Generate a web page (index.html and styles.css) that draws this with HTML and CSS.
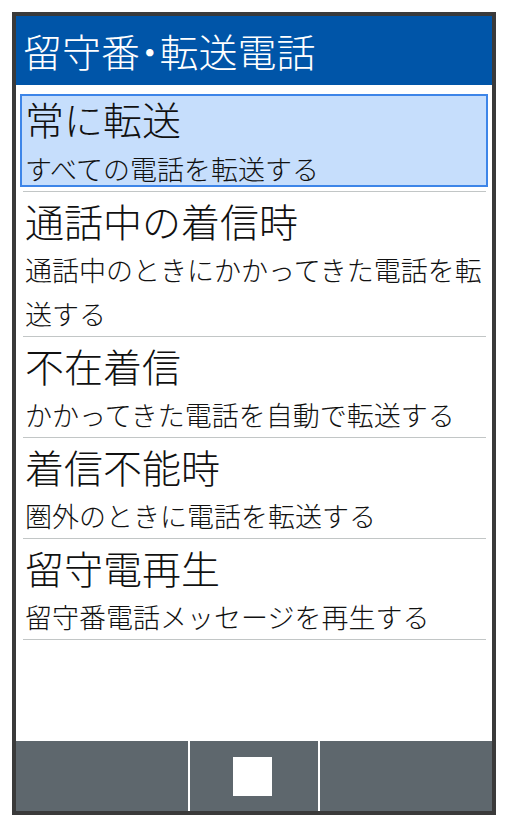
FILE: index.html
```html
<!DOCTYPE html>
<html lang="ja">
<head>
    <meta charset="UTF-8">
    <meta name="viewport" content="width=device-width, initial-scale=1.0">
    <title>留守番・転送電話</title>
    <link rel="stylesheet" href="styles.css">
</head>
<body>
    <div class="phone">
        <div class="header">留守番<span class="dot">・</span>転送電話</div>
        <div class="list">
            <div class="item first">
                <div class="selected">
                    <div class="title">常に転送</div>
                    <div class="sub">すべての電話を転送する</div>
                </div>
            </div>
            <div class="item">
                <div class="title">通話中の着信時</div>
                <div class="sub">通話中のときにかかってきた電話を転送する</div>
            </div>
            <div class="item">
                <div class="title">不在着信</div>
                <div class="sub">かかってきた電話を自動で転送する</div>
            </div>
            <div class="item">
                <div class="title">着信不能時</div>
                <div class="sub">圏外のときに電話を転送する</div>
            </div>
            <div class="item">
                <div class="title">留守電再生</div>
                <div class="sub">留守番電話メッセージを再生する</div>
            </div>
        </div>
        <div class="softkeys">
            <div class="key"></div>
            <div class="key center"><span class="square"></span></div>
            <div class="key"></div>
        </div>
    </div>
</body>
</html>
```

FILE: styles.css
```css
body {
    margin: 0;
    padding: 0;
    background-color: #ffffff;
    font-family: "Noto Sans CJK JP", "Noto Sans", sans-serif;
    font-weight: 300;
}

.phone {
    margin: 12px 0 0 12px;
    width: 484px;
    height: 803px;
    box-sizing: border-box;
    border: 4px solid #3a3a3a;
    display: flex;
    flex-direction: column;
    background-color: #ffffff;
}

.header {
    height: 69px;
    flex-shrink: 0;
    background-color: #0055a8;
    color: #ffffff;
    font-size: 39px;
    line-height: 1;
    display: flex;
    align-items: center;
    padding-left: 7px;
    white-space: nowrap;
}

/* half-width middle dot */
.dot {
    font-feature-settings: "halt";
}

.list {
    padding: 0 6px 0 7px;
    color: #111111;
}

.item {
    padding: 0 0 0 2px;
    border-bottom: 1px solid #c2c6c6;
}

.title {
    font-size: 39px;
    line-height: 56px;
    white-space: nowrap;
}

.sub {
    font-size: 27px;
    line-height: 44px;
}

.item.first {
    padding: 9px 0 4px 0;
}

.selected {
    margin: 0 -2px 0 -3px;
    padding: 0 3px;
    height: 93px;
    box-sizing: border-box;
    border: 2px solid #3d85e8;
    background-color: #c6defc;
}

.selected .title {
    line-height: 44px;
}

.selected .sub {
    margin-top: 12px;
    line-height: 33px;
}

.softkeys {
    margin-top: auto;
    height: 70px;
    flex-shrink: 0;
    display: grid;
    grid-template-columns: 172px 128px 1fr;
    column-gap: 2px;
    background-color: #ffffff;
}

.key {
    background-color: #5e676d;
}

.key.center {
    display: flex;
    justify-content: center;
    align-items: center;
    padding-right: 4px;
}

.square {
    width: 39px;
    height: 39px;
    background-color: #ffffff;
}
```
